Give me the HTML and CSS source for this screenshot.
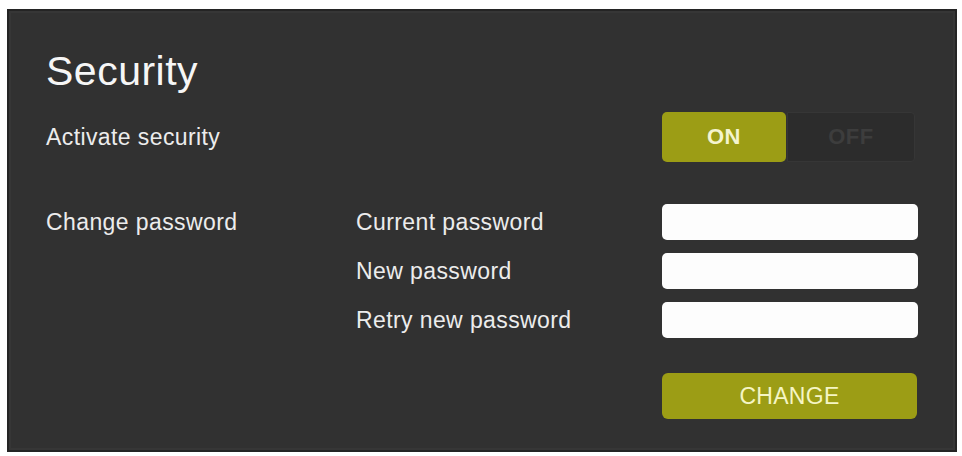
FILE: index.html
```html
<!DOCTYPE html>
<html lang="en">
<head>
<meta charset="utf-8">
<title>Security</title>
<link rel="stylesheet" href="styles.css">
</head>
<body>
<section class="panel">
  <h1 class="panel-title">Security</h1>

  <div class="setting-row">
    <span class="label">Activate security</span>
    <div class="toggle" role="group" aria-label="Activate security">
      <button class="toggle-seg toggle-on" type="button">ON</button>
      <button class="toggle-seg toggle-off" type="button">OFF</button>
    </div>
  </div>

  <form class="password-grid">
    <span class="label group-label">Change password</span>
    <label class="label sub-label" for="pw-current">Current password</label>
    <input class="field" id="pw-current" type="password">
    <label class="label sub-label" for="pw-new">New password</label>
    <input class="field" id="pw-new" type="password">
    <label class="label sub-label" for="pw-retry">Retry new password</label>
    <input class="field" id="pw-retry" type="password">
    <button class="change-btn" type="button">CHANGE</button>
  </form>
</section>
</body>
</html>
```

FILE: styles.css
```css
html, body {
  margin: 0;
  background: #ffffff;
}

body {
  padding: 9px 5px 4px 7px;
  font-family: "Liberation Sans", Arial, sans-serif;
}

.panel {
  box-sizing: border-box;
  width: 950px;
  height: 443px;
  padding: 36px 37px 0 37px;
  background: #313131;
  border: 2px solid #242424;
  box-shadow: inset 0 0 0 2px #363636;
  color: #f1f1f1;
}

.panel-title {
  margin: 0 0 17px 0;
  font-size: 41px;
  line-height: 48px;
  font-weight: normal;
  letter-spacing: 0.5px;
  color: #f6f6f6;
}

.label {
  font-size: 23px;
  line-height: 28px;
  letter-spacing: 0.4px;
  color: #ececec;
}

.setting-row {
  display: flex;
  align-items: center;
  justify-content: space-between;
  width: 869px;
}

.toggle {
  display: flex;
  width: 253px;
  height: 50px;
}

.toggle-seg {
  font-family: inherit;
  font-size: 22px;
  font-weight: bold;
  letter-spacing: 0.5px;
  border: none;
  padding: 0;
  cursor: pointer;
}

.toggle-on {
  width: 124px;
  background: #9c9d15;
  color: #f4f4cf;
  border-radius: 5px;
}

.toggle-off {
  flex: 1;
  margin-left: 1px;
  background: #2c2c2c;
  border: 1px solid #363636;
  border-radius: 0 4px 4px 0;
  color: #3d3d3d;
}

.password-grid {
  display: grid;
  grid-template-columns: 310px 306px 256px;
  grid-auto-rows: 36px;
  row-gap: 13px;
  align-items: center;
  margin: 42px 0 0 0;
}

.group-label {
  grid-column: 1;
  grid-row: 1;
}

.sub-label {
  grid-column: 2;
}

.field {
  grid-column: 3;
  box-sizing: border-box;
  height: 36px;
  width: 256px;
  border: none;
  border-radius: 5px;
  background: #fdfdfd;
}

.change-btn {
  grid-column: 3;
  grid-row: 4;
  align-self: start;
  margin-top: 22px;
  width: 255px;
  height: 46px;
  border: none;
  border-radius: 6px;
  background: #9c9d15;
  color: #f5f5c4;
  font-family: inherit;
  font-size: 23px;
  letter-spacing: 0.3px;
  cursor: pointer;
}
```
